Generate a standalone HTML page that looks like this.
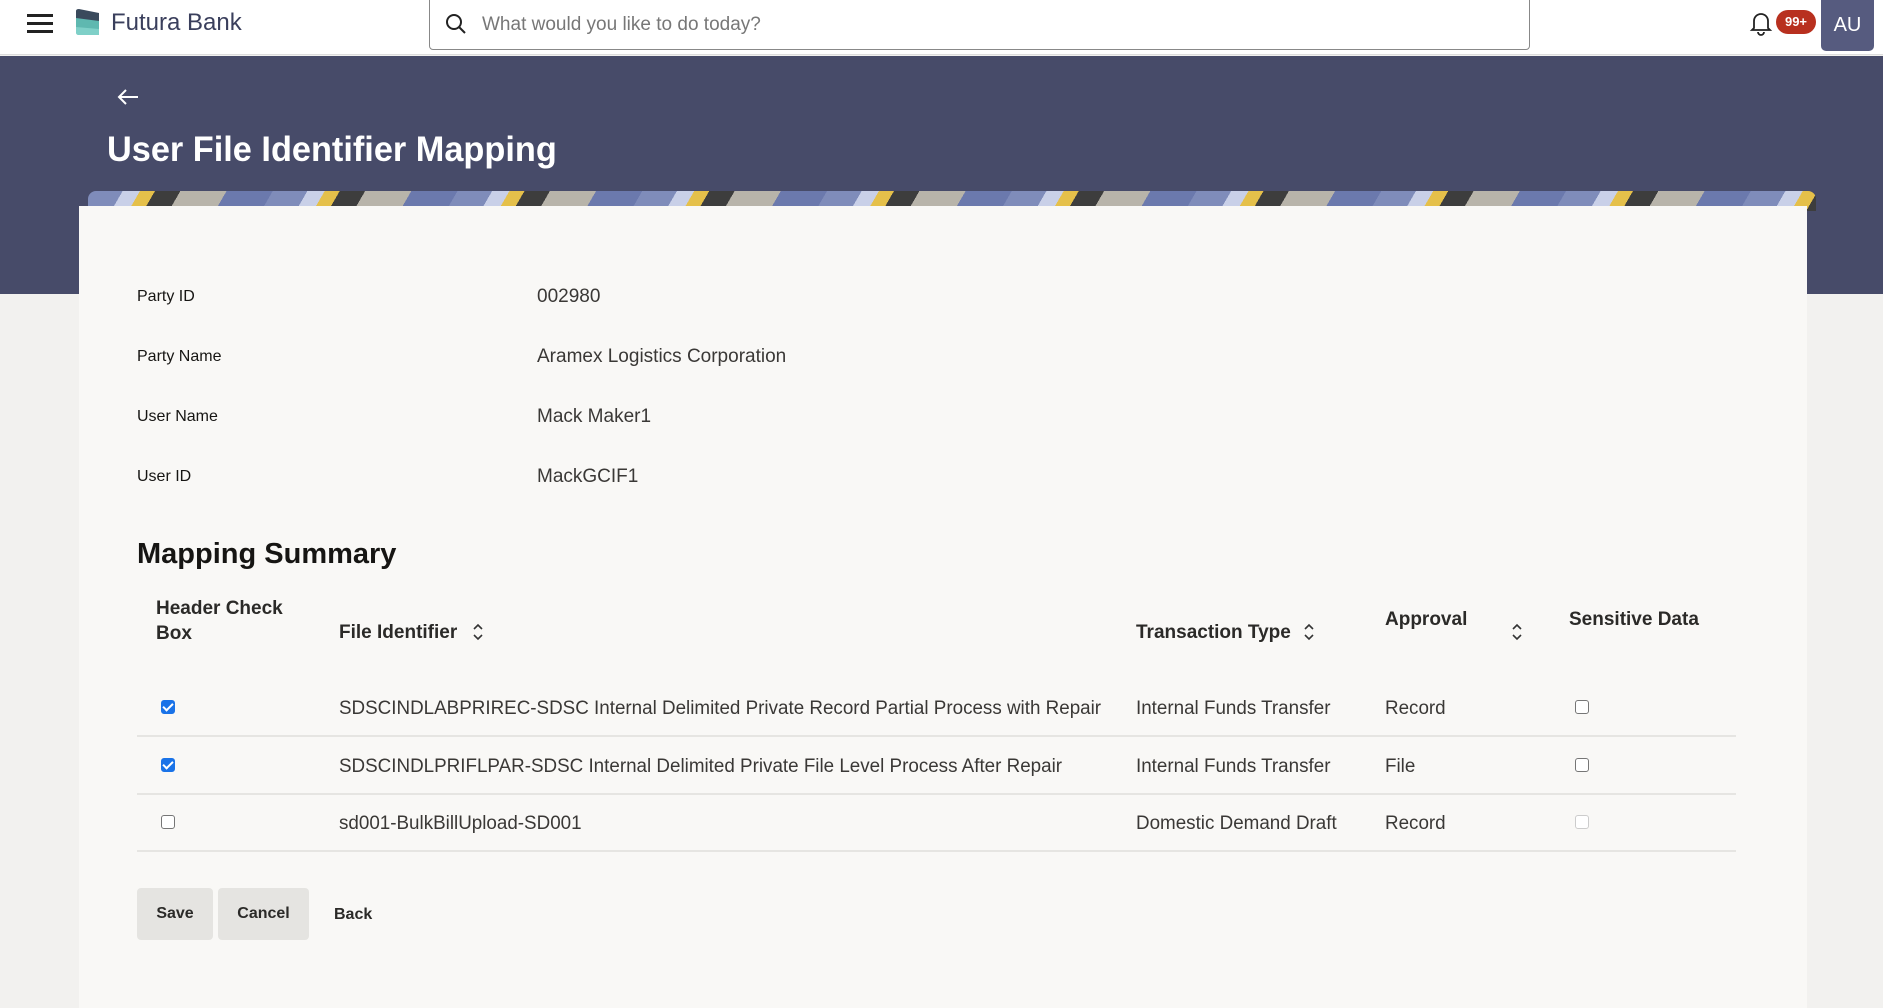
<!DOCTYPE html>
<html><head><meta charset="utf-8">
<style>
*{margin:0;padding:0;box-sizing:border-box}
body{width:1883px;height:1008px;overflow:hidden;background:#f2f1ef;font-family:"Liberation Sans",sans-serif;position:relative;color:#161513}
.a{position:absolute;white-space:nowrap}
#hdr{position:absolute;left:0;top:0;width:1883px;height:55px;background:#fff;border-bottom:1px solid #ddd}
#band{position:absolute;left:0;top:56px;width:1883px;height:238px;background:#474b69}
#strip{position:absolute;left:88px;top:191px;width:1728px;height:20px;border-radius:8px 8px 0 0;background:repeating-linear-gradient(120deg,#7f8cba 0 30px,#c9d0e8 30px 45px,#e5c04a 45px 58px,#3d3d3d 58px 80px,#b8b4aa 80px 120px,#6b79ad 120px 160px)}
#card{position:absolute;left:79px;top:206px;width:1728px;height:802px;background:#f9f8f6}
.lbl{font-size:16px;color:#161513;font-weight:500}
.val{font-size:19px;color:#3a3836}
.th{font-size:19px;font-weight:bold;color:#2b2a28}
.td{font-size:19px;color:#3a3836;transform:scaleX(.99);transform-origin:left}
.line{position:absolute;left:137px;width:1599px;height:2px;background:#e6e5e2}
.cb{position:absolute;width:14px;height:14px;border:1.5px solid #767676;border-radius:3px;background:#fff}
.cb.on{background:#1a73e8;border-color:#1a73e8}
.cb.on::after{content:"";position:absolute;left:3px;top:0px;width:4px;height:8px;border:solid #fff;border-width:0 2px 2px 0;transform:rotate(45deg)}
.btn{position:absolute;top:887px;height:52px;background:#e5e4e1;border-radius:4px;font-size:16px;font-weight:bold;color:#2b2a28;display:flex;align-items:center;justify-content:center}
</style></head><body>
<div id="hdr">
 <div class="a" style="left:27px;top:14px;width:26px;height:3px;background:#222;box-shadow:0 8px 0 #222,0 16px 0 #222"></div>
 <svg class="a" style="left:73px;top:8px" width="30" height="30" viewBox="0 0 30 30"><path d="M3 3 Q3 1 6 1 L26 5 L26 20 L3 18Z" fill="#3a4a5c"/><path d="M3 10 L26 13 L26 27 L6 27 Q3 27 3 24Z" fill="#5fb8b0"/><path d="M3 19 L26 21 L26 27 L6 27 Q3 27 3 24Z" fill="#7fd0c8"/></svg>
 <div class="a" style="left:111px;top:9px;font-size:24px;color:#3a3f5c">Futura Bank</div>
 <div class="a" style="left:429px;top:-1px;width:1101px;height:51px;border:1px solid #888;border-radius:0 0 4px 4px;background:#fff"></div>
 <svg class="a" style="left:444px;top:12px" width="24" height="24" viewBox="0 0 24 24"><circle cx="10" cy="10" r="7" fill="none" stroke="#222" stroke-width="2"/><path d="M15 15l6 6" stroke="#222" stroke-width="2"/></svg>
 <div class="a" style="left:482px;top:14px;font-size:19px;color:#777">What would you like to do today?</div>
 <svg class="a" style="left:1749px;top:10px" width="24" height="26" viewBox="0 0 24 26"><path d="M5 18V11a7 7 0 0114 0v7l2 2H3z" fill="none" stroke="#222" stroke-width="1.8"/><path d="M9 22a3 3 0 006 0" fill="none" stroke="#222" stroke-width="1.8"/></svg>
 <div class="a" style="left:1776px;top:10px;width:40px;height:24px;border-radius:12px;background:#b8301f;color:#fff;font-size:13px;font-weight:bold;text-align:center;line-height:24px">99+</div>
 <div class="a" style="left:1821px;top:0;width:53px;height:51px;border-radius:0 0 5px 5px;background:#565b7f;color:#fff;font-size:20px;text-align:center;line-height:51px">AU</div>
</div>
<div id="band"></div>
<svg class="a" style="left:116px;top:88px" width="24" height="18" viewBox="0 0 24 18"><path d="M22 9H3M10 2L3 9l7 7" fill="none" stroke="#fff" stroke-width="2"/></svg>
<div class="a" style="left:107px;top:130px;font-size:35px;font-weight:bold;color:#fff;transform:scaleX(.98);transform-origin:left">User File Identifier Mapping</div>
<div id="strip"></div>
<div id="card"></div>
<div class="a lbl" style="left:137px;top:288px">Party ID</div>
<div class="a val" style="left:537px;top:286px">002980</div>
<div class="a lbl" style="left:137px;top:348px">Party Name</div>
<div class="a val" style="left:537px;top:346px">Aramex Logistics Corporation</div>
<div class="a lbl" style="left:137px;top:408px">User Name</div>
<div class="a val" style="left:537px;top:406px">Mack Maker1</div>
<div class="a lbl" style="left:137px;top:468px">User ID</div>
<div class="a val" style="left:537px;top:466px">MackGCIF1</div>
<div class="a" style="left:137px;top:538px;font-size:29px;font-weight:bold;color:#161513">Mapping Summary</div>
<div class="a th" style="left:156px;top:596px;line-height:25px">Header Check<br>Box</div>
<div class="a th" style="left:339px;top:622px">File Identifier</div>
<div class="a th" style="left:1136px;top:622px">Transaction Type</div>
<div class="a th" style="left:1385px;top:609px">Approval</div>
<div class="a th" style="left:1569px;top:609px">Sensitive Data</div>
<svg class="a" style="left:473px;top:622px" width="10" height="20" viewBox="0 0 10 20"><path d="M1 7l4-4 4 4M1 13l4 4 4-4" fill="none" stroke="#333" stroke-width="1.6"/></svg>
<svg class="a" style="left:1304px;top:622px" width="10" height="20" viewBox="0 0 10 20"><path d="M1 7l4-4 4 4M1 13l4 4 4-4" fill="none" stroke="#333" stroke-width="1.6"/></svg>
<svg class="a" style="left:1512px;top:622px" width="10" height="20" viewBox="0 0 10 20"><path d="M1 7l4-4 4 4M1 13l4 4 4-4" fill="none" stroke="#333" stroke-width="1.6"/></svg>
<div class="cb on" style="left:161px;top:700px"></div>
<div class="a td" style="left:339px;top:698px">SDSCINDLABPRIREC-SDSC Internal Delimited Private Record Partial Process with Repair</div>
<div class="a td" style="left:1136px;top:698px">Internal Funds Transfer</div>
<div class="a td" style="left:1385px;top:698px">Record</div>
<div class="cb" style="left:1575px;top:700px"></div>
<div class="line" style="top:735px"></div>
<div class="cb on" style="left:161px;top:758px"></div>
<div class="a td" style="left:339px;top:756px">SDSCINDLPRIFLPAR-SDSC Internal Delimited Private File Level Process After Repair</div>
<div class="a td" style="left:1136px;top:756px">Internal Funds Transfer</div>
<div class="a td" style="left:1385px;top:756px">File</div>
<div class="cb" style="left:1575px;top:758px"></div>
<div class="line" style="top:793px"></div>
<div class="cb" style="left:161px;top:815px"></div>
<div class="a td" style="left:339px;top:813px">sd001-BulkBillUpload-SD001</div>
<div class="a td" style="left:1136px;top:813px">Domestic Demand Draft</div>
<div class="a td" style="left:1385px;top:813px">Record</div>
<div class="cb" style="left:1575px;top:815px;border-color:#ccc"></div>
<div class="line" style="top:850px"></div>
<div class="btn" style="left:137px;width:76px;top:888px">Save</div>
<div class="btn" style="left:218px;width:91px;top:888px">Cancel</div>
<div class="a" style="left:334px;top:906px;font-size:16px;font-weight:bold;color:#2b2a28">Back</div>
</body></html>
